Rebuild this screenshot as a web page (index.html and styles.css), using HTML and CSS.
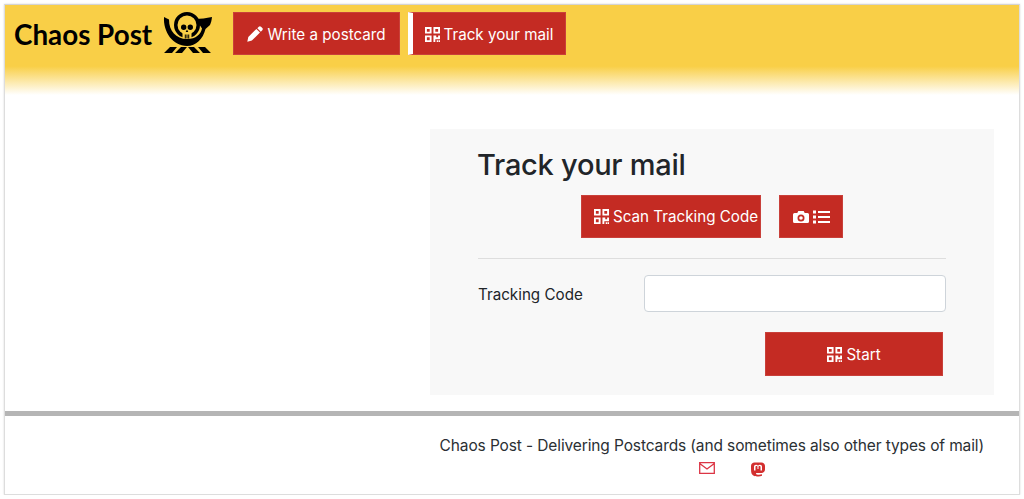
FILE: index.html
```html
<!DOCTYPE html>
<html lang="en">

<head>
    <meta charset="UTF-8">
    <meta name="viewport" content="width=device-width, initial-scale=1.0">
    <title>Chaos Post - Track your mail</title>
    <link rel="stylesheet" href="styles.css">
</head>

<body>
    <svg class="icon-defs" width="0" height="0">
        <symbol id="qr" viewBox="0 0 16 16">
            <path fill="currentColor" fill-rule="evenodd" d="M0 0h7v7H0zM2 2v3h3V2zM9 0h7v7H9zM11 2v3h3V2zM0 9h7v7H0zM2 11v3h3v-3zM9 9h3v2h2V9h2v4h-5v3H9zM12.500 14h1.500v2h-1.500zM14.500 14H16v2h-1.500z"/>
        </symbol>
    </svg>

    <div class="frame">
        <header class="site-header">
            <div class="logo">
                <span class="logo-text">Chaos Post</span>
                <svg class="logo-horn" viewBox="0 0 50 42" width="50" height="42">
                    <!-- horn -->
                    <path d="M1 5l5 2.500C6 19 13 27 24 27c9 0 14-5 15-10.500L36 12l-4-5c6 0 11-1 17-2-.3 3-1 6-2 8l-4.500 4C40 27 33 34 24 34 10 34 0 20 1 5z"/>
                    <path fill-rule="evenodd" d="M24 0a13 13 0 1 1 0 26 13 13 0 0 1 0-26zM24 3.500a9.500 9.500 0 1 0 0 19 9.500 9.500 0 0 0 0-19z"/>
                    <!-- skull -->
                    <path class="skull" d="M24 8c4.500 0 8 3 8 7 0 2.500-1.500 4-3.500 5v6h-9v-6c-2-1-3.500-2.500-3.500-5 0-4 3.500-7 8-7z"/>
                    <path d="M20.700 12.500a2.700 2.700 0 1 0 0 5.400 2.700 2.700 0 0 0 0-5.400zM27.300 12.500a2.700 2.700 0 1 0 0 5.400 2.700 2.700 0 0 0 0-5.400zM24 17.500l-1.300 2.500h2.600zM21.800 22.500h1v4h-1zM23.500 22.500h1v4h-1zM25.200 22.500h1v4h-1z"/>
                    <!-- stripes -->
                    <path d="M1 41l6-6h7l-5 6zM12 41l6-6h6l-5 6zM48 41l-6-6h-7l5 6zM37 41l-6-6h-6l5 6z"/>
                </svg>
            </div>
            <nav class="main-nav">
                <a class="btn nav-btn" href="#">
                    <svg class="icon" viewBox="0 0 16 16"><path fill="currentColor" d="M11.800.700a1.600 1.600 0 0 1 2.200 0l1.300 1.300a1.600 1.600 0 0 1 0 2.200l-1.500 1.500-3.500-3.500zM9.400 2.900l3.600 3.600-8.100 8.100-4.600 1.200 1-4.700z"/></svg>
                    Write a postcard
                </a>
                <a class="btn nav-btn active" href="#">
                    <svg class="icon qr-icon"><use href="#qr"/></svg>
                    Track your mail
                </a>
            </nav>
        </header>

        <main class="content">
            <section class="track-panel">
                <h1>Track your mail</h1>
                <div class="scan-row">
                    <button class="btn scan-btn">
                        <svg class="icon qr-icon"><use href="#qr"/></svg>
                        Scan Tracking Code
                    </button>
                    <button class="btn options-btn">
                        <svg class="icon" viewBox="0 0 16 16"><path fill="currentColor" fill-rule="evenodd" d="M5.300 2h5.400l1 2H14.500A1.500 1.500 0 0 1 16 5.500v7a1.500 1.500 0 0 1-1.500 1.500h-13A1.500 1.500 0 0 1 0 12.500v-7A1.500 1.500 0 0 1 1.500 4h2.800zM8 5.500a3.500 3.500 0 1 0 0 7 3.500 3.500 0 0 0 0-7zM8 7.200a1.800 1.800 0 1 1 0 3.600 1.800 1.800 0 0 1 0-3.600z"/></svg>
                        <svg class="icon list-icon" viewBox="0 0 17 16"><path fill="currentColor" d="M0 1.500h3v3H0zM0 6.500h3v3H0zM0 11.500h3v3H0zM5 2h12v2H5zM5 7h12v2H5zM5 12h12v2H5z"/></svg>
                    </button>
                </div>
                <hr>
                <form class="track-form">
                    <label for="code">Tracking Code</label>
                    <input id="code" type="text">
                </form>
                <div class="start-row">
                    <button class="btn start-btn">
                        <svg class="icon qr-icon"><use href="#qr"/></svg>
                        Start
                    </button>
                </div>
            </section>
        </main>

        <footer class="site-footer">
            <p>Chaos Post - Delivering Postcards (and sometimes also other types of mail)</p>
            <div class="footer-links">
                <a class="mail-link" href="#" aria-label="Mail">
                    <svg viewBox="0 0 16 12" width="16" height="12"><path fill="none" stroke="currentColor" stroke-width="1.300" d="M.7.700h14.600v10.600H.7zM.7 1.500L8 7l7.300-5.500"/></svg>
                </a>
                <a href="#" aria-label="Mastodon">
                    <svg viewBox="0 0 14 15" width="14" height="15"><path fill="currentColor" fill-rule="evenodd" d="M3.500.500h7C12.500.500 14 2 14 4v3.500c0 2-1.500 3.500-3.500 3.500H6c-.6 0-1 .1-1 .4 0 1 1.500 1.300 3 1.300 1 0 2-.1 3-.4v1.500c-1 .5-2.500.7-3.500.7C4 14.500 1 14 .3 10.500 0 9 0 6 0 4 0 2 1.500.500 3.500.500zM3 8.500h1.500V5c0-.6.400-1 1-1s1 .4 1 1v2h1V5c0-.6.400-1 1-1s1 .4 1 1v3.500H11V4.800C11 3.500 10.200 2.700 9 2.700c-.9 0-1.600.4-2 1.100-.4-.7-1.100-1.100-2-1.100-1.200 0-2 .8-2 2.100z"/></svg>
                </a>
            </div>
        </footer>
    </div>
</body>

</html>
```

FILE: styles.css
```css
* {
    box-sizing: border-box;
}

body {
    margin: 0;
    font-family: Inter, "Liberation Sans", sans-serif;
    font-size: 15.2px;
    color: #212529;
    background: #fff;
}

.icon-defs {
    display: block;
    height: 0;
}

.frame {
    margin: 4px 4px 0;
    height: 491px;
    overflow: hidden;
    border: 1px solid #ddd;
    border-top-color: #d4d4d4;
    box-shadow: 0 0 2px rgba(0, 0, 0, 0.15);
}

.site-header {
    display: flex;
    align-items: flex-start;
    height: 90px;
    padding: 7px 0 0 9px;
    background: linear-gradient(to bottom, #f9cf47 0%, #f9cf47 68%, #ffffff 100%);
}

.logo {
    display: flex;
    align-items: center;
    width: 219px;
    height: 43px;
}

.logo-text {
    width: 149px;
    font-family: Lato, sans-serif;
    font-size: 27.8px;
    font-weight: 700;
    color: #000;
    white-space: nowrap;
    padding-top: 1px;
}

.logo-horn {
    fill: #000;
    flex: none;
    margin-top: -1px;
}

.logo-horn .skull {
    fill: #f9cf47;
}

.main-nav {
    display: flex;
    gap: 8px;
}

.btn {
    display: inline-flex;
    align-items: center;
    justify-content: center;
    gap: 4px;
    height: 43px;
    border: 1px solid #c9403a;
    background: #c42b23;
    color: #fff;
    font-family: inherit;
    font-size: 15.2px;
    text-decoration: none;
    white-space: nowrap;
}

.icon {
    width: 16px;
    height: 16px;
    flex: none;
}

.qr-icon {
    width: 15px;
    height: 15px;
}

.list-icon {
    width: 17px;
}

.nav-btn {
    width: 167px;
    padding-top: 1px;
}

.nav-btn.active {
    width: 158px;
    border-left: 5px solid #fff;
}

.content {
    display: flex;
    justify-content: flex-end;
    padding: 34px 25px 16px 0;
}

.track-panel {
    width: 564px;
    height: 266px;
    padding: 16px 48px 0;
    background: #f8f8f8;
}

.track-panel h1 {
    margin: 0 0 10px -1px;
    font-size: 29px;
    font-weight: 500;
    line-height: 40px;
    letter-spacing: -0.25px;
}

.scan-row {
    display: flex;
    justify-content: center;
    gap: 18px;
}

.scan-btn {
    width: 180px;
    padding-left: 16px;
}

.options-btn {
    width: 64px;
}

.track-panel hr {
    margin: 20px 0 16px;
    border: 0;
    border-top: 1px solid #dedede;
}

.track-form {
    display: grid;
    grid-template-columns: 166px 1fr;
    align-items: center;
}

.track-form label {
    padding-top: 1px;
}

.track-form input {
    height: 37px;
    border: 1px solid #ced4da;
    border-radius: 4px;
    background: #fff;
}

.start-row {
    display: flex;
    justify-content: flex-end;
    padding: 20px 3px 0 0;
}

.start-btn {
    width: 178px;
    height: 44px;
}

.site-footer {
    border-top: 5px solid #b5b5b5;
    padding-top: 20px;
    padding-right: 35px;
    text-align: right;
}

.site-footer p {
    margin: 0;
    font-size: 15.5px;
    line-height: 19px;
    letter-spacing: -0.12px;
    color: #2b2f33;
}

.footer-links {
    display: flex;
    gap: 36px;
    justify-content: flex-end;
    padding: 7px 219px 0 0;
}

.footer-links a {
    color: #d32f2f;
    line-height: 0;
}

.footer-links .mail-link {
    color: #dc3545;
}
```
